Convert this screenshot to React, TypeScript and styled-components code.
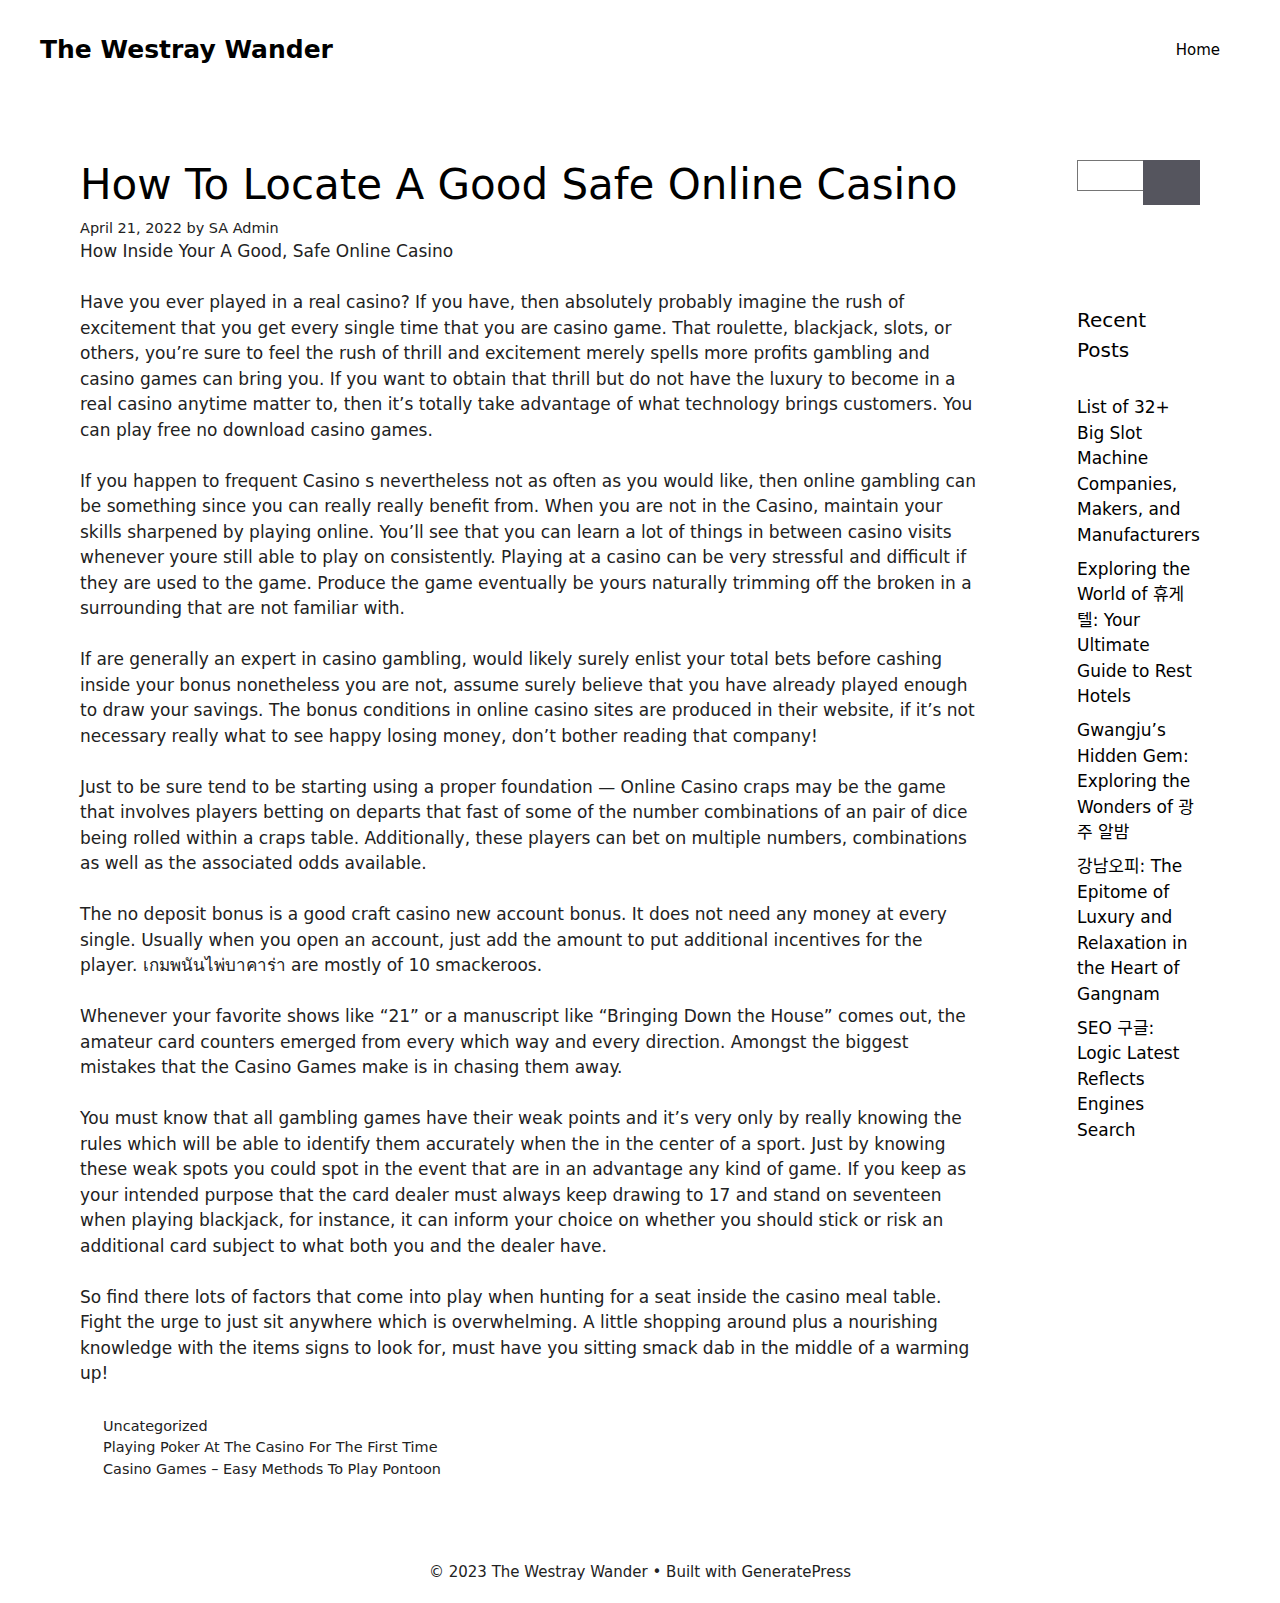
import React from "react";
import styled, { createGlobalStyle } from "styled-components";

const Global = createGlobalStyle`
  html, body { margin: 0; padding: 0; background: #ffffff; }
  body {
    font-family: "DejaVu Sans", "Noto Sans", "Noto Sans CJK KR", sans-serif;
    font-size: 17px;
    line-height: 1.5;
    color: #222222;
  }
  * { box-sizing: border-box; }
  a { color: inherit; text-decoration: none; }
`;

const Header = styled.header`
  display: flex;
  align-items: center;
  justify-content: space-between;
  padding: 20px 40px;
`;

const SiteTitle = styled.a`
  font-size: 25px;
  font-weight: 700;
  line-height: 1.2;
  color: #000;
`;

const Nav = styled.nav`
  display: flex;
`;

const NavItem = styled.a`
  display: block;
  padding: 0 20px;
  line-height: 60px;
  font-size: 15px;
  color: #000;
`;

const Container = styled.div`
  display: flex;
  width: 1200px;
  margin: 0 auto;
  align-items: flex-start;
`;

const ContentArea = styled.main`
  width: 997px;
  flex: none;
  margin: 20px 0;
`;

const Article = styled.article`
  width: 980px;
  padding: 40px;
`;

const Title = styled.h1`
  margin: 0;
  font-size: 42px;
  font-weight: 400;
  line-height: 1.2;
  color: #000;
  white-space: nowrap;
`;

const Meta = styled.div`
  margin-top: 0.5em;
  font-size: 14.45px;
  line-height: 1.5;
`;

const Paragraph = styled.p`
  margin: 0 0 1.5em;
  &:last-child { margin-bottom: 0; }
`;

const EntryContent = styled.div``;

const FooterMeta = styled.footer`
  margin-top: 2em;
  padding-left: 23px;
  font-size: 14.45px;
  line-height: 1.5;
`;

const MetaLine = styled.div``;

const Sidebar = styled.aside`
  width: 203px;
  flex: none;
  margin-top: 20px;
`;

const Widget = styled.section`
  padding: 40px 39px 40px 40px;
  margin-bottom: 20px;
`;

const SearchRow = styled.form`
  display: flex;
  align-items: flex-start;
`;

const SearchInput = styled.input`
  width: 66px;
  height: 31px;
  border: 1px solid #757575;
  border-right: none;
  padding: 0 6px;
  margin: 0;
  background: #fff;
  font: inherit;
`;

const SearchButton = styled.button`
  width: 57px;
  height: 45px;
  border: none;
  margin: 0;
  padding: 0;
  background: #55555e;
`;

const WidgetTitle = styled.h2`
  margin: 0 0 30px;
  font-size: 20px;
  font-weight: 400;
  line-height: 1.5;
  color: #000;
`;

const PostList = styled.ul`
  list-style: none;
  margin: 0;
  padding: 0;
`;

const PostItem = styled.li`
  margin-bottom: 0.5em;
  color: #000;
  &:last-child { margin-bottom: 0; }
`;

const Footer = styled.footer`
  padding: 20px 40px;
  text-align: center;
  font-size: 15px;
  line-height: 1.5;
`;

const paragraphs = [
  "Have you ever played in a real casino? If you have, then absolutely probably imagine the rush of excitement that you get every single time that you are casino game. That roulette, blackjack, slots, or others, you’re sure to feel the rush of thrill and excitement merely spells more profits gambling and casino games can bring you. If you want to obtain that thrill but do not have the luxury to become in a real casino anytime matter to, then it’s totally take advantage of what technology brings customers. You can play free no download casino games.",
  "If you happen to frequent Casino s nevertheless not as often as you would like, then online gambling can be something since you can really really benefit from. When you are not in the Casino, maintain your skills sharpened by playing online. You’ll see that you can learn a lot of things in between casino visits whenever youre still able to play on consistently. Playing at a casino can be very stressful and difficult if they are used to the game. Produce the game eventually be yours naturally trimming off the broken in a surrounding that are not familiar with.",
  "If are generally an expert in casino gambling, would likely surely enlist your total bets before cashing inside your bonus nonetheless you are not, assume surely believe that you have already played enough to draw your savings. The bonus conditions in online casino sites are produced in their website, if it’s not necessary really what to see happy losing money, don’t bother reading that company!",
  "Just to be sure tend to be starting using a proper foundation — Online Casino craps may be the game that involves players betting on departs that fast of some of the number combinations of an pair of dice being rolled within a craps table. Additionally, these players can bet on multiple numbers, combinations as well as the associated odds available.",
];

const paragraphsAfter = [
  "Whenever your favorite shows like “21” or a manuscript like “Bringing Down the House” comes out, the amateur card counters emerged from every which way and every direction. Amongst the biggest mistakes that the Casino Games make is in chasing them away.",
  "You must know that all gambling games have their weak points and it’s very only by really knowing the rules which will be able to identify them accurately when the in the center of a sport. Just by knowing these weak spots you could spot in the event that are in an advantage any kind of game. If you keep as your intended purpose that the card dealer must always keep drawing to 17 and stand on seventeen when playing blackjack, for instance, it can inform your choice on whether you should stick or risk an additional card subject to what both you and the dealer have.",
  "So find there lots of factors that come into play when hunting for a seat inside the casino meal table. Fight the urge to just sit anywhere which is overwhelming. A little shopping around plus a nourishing knowledge with the items signs to look for, must have you sitting smack dab in the middle of a warming up!",
];

const recentPosts = [
  "List of 32+ Big Slot Machine Companies, Makers, and Manufacturers",
  "Exploring the World of 휴게텔: Your Ultimate Guide to Rest Hotels",
  "Gwangju’s Hidden Gem: Exploring the Wonders of 광주 알밤",
  "강남오피: The Epitome of Luxury and Relaxation in the Heart of Gangnam",
  "SEO 구글: Logic Latest Reflects Engines Search",
];

export default function App() {
  return (
    <>
      <Global />
      <Header>
        <SiteTitle href="#">The Westray Wander</SiteTitle>
        <Nav>
          <NavItem href="#">Home</NavItem>
        </Nav>
      </Header>
      <Container>
        <ContentArea>
          <Article>
            <Title>How To Locate A Good Safe Online Casino</Title>
            <Meta>
              April 21, 2022 by <a href="#">SA Admin</a>
            </Meta>
            <EntryContent>
              <Paragraph>How Inside Your A Good, Safe Online Casino</Paragraph>
              {paragraphs.map((p, i) => (
                <Paragraph key={i}>{p}</Paragraph>
              ))}
              <Paragraph>
                The no deposit bonus is a good craft casino new account bonus. It does not need any money at every single. Usually when you open an account, just add the amount to put additional incentives for the player. <a href="#">เกมพนันไพ่บาคาร่า</a> are mostly of 10 smackeroos.
              </Paragraph>
              {paragraphsAfter.map((p, i) => (
                <Paragraph key={i}>{p}</Paragraph>
              ))}
            </EntryContent>
            <FooterMeta>
              <MetaLine><a href="#">Uncategorized</a></MetaLine>
              <MetaLine><a href="#">Playing Poker At The Casino For The First Time</a></MetaLine>
              <MetaLine><a href="#">Casino Games – Easy Methods To Play Pontoon</a></MetaLine>
            </FooterMeta>
          </Article>
        </ContentArea>
        <Sidebar>
          <Widget>
            <SearchRow onSubmit={(e) => e.preventDefault()}>
              <SearchInput type="search" aria-label="Search" />
              <SearchButton type="submit" aria-label="Search" />
            </SearchRow>
          </Widget>
          <Widget>
            <WidgetTitle>Recent Posts</WidgetTitle>
            <PostList>
              {recentPosts.map((p) => (
                <PostItem key={p}>
                  <a href="#">{p}</a>
                </PostItem>
              ))}
            </PostList>
          </Widget>
        </Sidebar>
      </Container>
      <Footer>© 2023 The Westray Wander • Built with GeneratePress</Footer>
    </>
  );
}
